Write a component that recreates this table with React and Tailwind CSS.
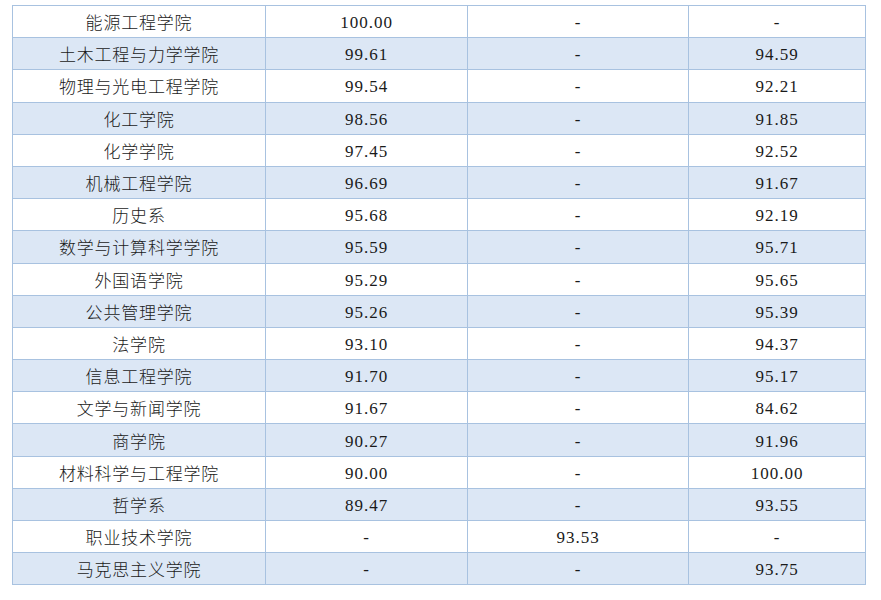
import React from "react";

const rows = [
  ["能源工程学院", "100.00", "-", "-"],
  ["土木工程与力学学院", "99.61", "-", "94.59"],
  ["物理与光电工程学院", "99.54", "-", "92.21"],
  ["化工学院", "98.56", "-", "91.85"],
  ["化学学院", "97.45", "-", "92.52"],
  ["机械工程学院", "96.69", "-", "91.67"],
  ["历史系", "95.68", "-", "92.19"],
  ["数学与计算科学学院", "95.59", "-", "95.71"],
  ["外国语学院", "95.29", "-", "95.65"],
  ["公共管理学院", "95.26", "-", "95.39"],
  ["法学院", "93.10", "-", "94.37"],
  ["信息工程学院", "91.70", "-", "95.17"],
  ["文学与新闻学院", "91.67", "-", "84.62"],
  ["商学院", "90.27", "-", "91.96"],
  ["材料科学与工程学院", "90.00", "-", "100.00"],
  ["哲学系", "89.47", "-", "93.55"],
  ["职业技术学院", "-", "93.53", "-"],
  ["马克思主义学院", "-", "-", "93.75"],
];

const App = () => {
  return (
    <div className="w-[881px] h-[600px] bg-white pt-[5px] pl-[12px]">
      <table className="border-collapse w-[853px] table-fixed text-[#1a1a1a]">
        <colgroup>
          <col className="w-[253px]" />
          <col className="w-[202px]" />
          <col className="w-[221px]" />
          <col className="w-[177px]" />
        </colgroup>
        <tbody>
          {rows.map((r, i) => (
            <tr
              key={i}
              className={i % 2 === 1 ? "bg-[#dce7f5] h-[32.2px]" : "bg-white h-[32.2px]"}
            >
              <td className="border border-[#a8c2e0] text-center p-0 text-[17px] tracking-[0.8px] font-light leading-none font-['Noto_Sans_CJK_SC',sans-serif]">
                {r[0]}
              </td>
              {r.slice(1).map((v, j) => (
                <td
                  key={j}
                  className="border border-[#a8c2e0] text-center p-0 pt-[2px] text-[17px] tracking-[1px] leading-none font-['Liberation_Serif',serif]"
                >
                  {v}
                </td>
              ))}
            </tr>
          ))}
        </tbody>
      </table>
    </div>
  );
};

export default App;
